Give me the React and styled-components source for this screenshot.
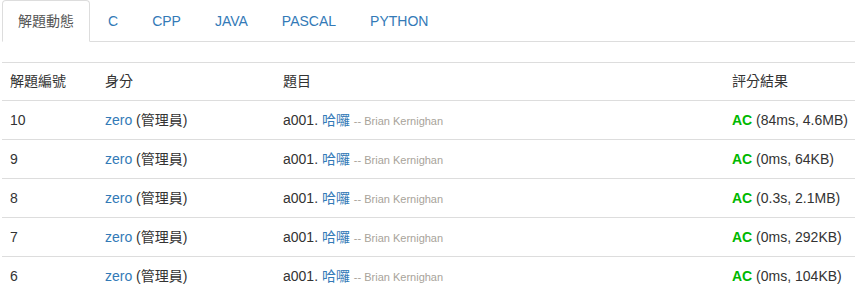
import React from 'react'
import styled, { createGlobalStyle } from 'styled-components'

const GlobalStyle = createGlobalStyle`
  body {
    margin: 0;
    background: #fff;
    font-family: 'Liberation Sans', 'Noto Sans CJK TC', sans-serif;
    font-size: 14px;
    color: #333;
  }
`

const Page = styled.div`
  padding-left: 2px;
`

const Tabs = styled.ul`
  display: flex;
  list-style: none;
  margin: 0;
  padding: 0;
  border-bottom: 1px solid #ddd;
`

const Tab = styled.li`
  margin-bottom: -1px;
  margin-right: 2px;
  padding: 10px 15px;
  line-height: 20px;
  border: 1px solid ${(p) => (p.active ? '#ddd' : 'transparent')};
  border-bottom-color: ${(p) => (p.active ? '#fff' : 'transparent')};
  border-radius: 4px 4px 0 0;
  background: ${(p) => (p.active ? '#fff' : 'transparent')};
  color: ${(p) => (p.active ? '#555' : '#337ab7')};
  cursor: pointer;
`

const Table = styled.table`
  width: 100%;
  margin-top: 20px;
  border-collapse: collapse;
  table-layout: fixed;
`

const Th = styled.th`
  box-sizing: border-box;
  text-align: left;
  font-weight: normal;
  padding: 8px;
  line-height: 21px;
  border-top: 1px solid #ddd;
  border-bottom: 1px solid #ddd;
  width: ${(p) => p.w || 'auto'};
`

const Td = styled.td`
  padding: 8px;
  line-height: 22px;
  border-top: 1px solid #ddd;
  white-space: nowrap;
`

const Link = styled.a`
  color: #337ab7;
  text-decoration: none;
`

const Author = styled.span`
  font-size: 11px;
  line-height: 14px;
  color: #a8a39a;
`

const Verdict = styled.b`
  color: #00b800;
  font-weight: bold;
`

const tabs = ['解題動態', 'C', 'CPP', 'JAVA', 'PASCAL', 'PYTHON']

const rows = [
  { id: 10, res: '84ms, 4.6MB' },
  { id: 9, res: '0ms, 64KB' },
  { id: 8, res: '0.3s, 2.1MB' },
  { id: 7, res: '0ms, 292KB' },
  { id: 6, res: '0ms, 104KB' },
]

const App = () => {
  return (
    <Page>
      <GlobalStyle />
      <Tabs>
        {tabs.map((t, i) => (
          <Tab key={t} active={i === 0}>
            {t}
          </Tab>
        ))}
      </Tabs>
      <Table>
        <thead>
          <tr>
            <Th w="95px">解題編號</Th>
            <Th w="178px">身分</Th>
            <Th w="449px">題目</Th>
            <Th>評分結果</Th>
          </tr>
        </thead>
        <tbody>
          {rows.map((r) => (
            <tr key={r.id}>
              <Td>{r.id}</Td>
              <Td>
                <Link href="#">zero</Link> (管理員)
              </Td>
              <Td>
                a001. <Link href="#">哈囉</Link> <Author>-- Brian Kernighan</Author>
              </Td>
              <Td>
                <Verdict>AC</Verdict> ({r.res})
              </Td>
            </tr>
          ))}
        </tbody>
      </Table>
    </Page>
  )
}

export default App
